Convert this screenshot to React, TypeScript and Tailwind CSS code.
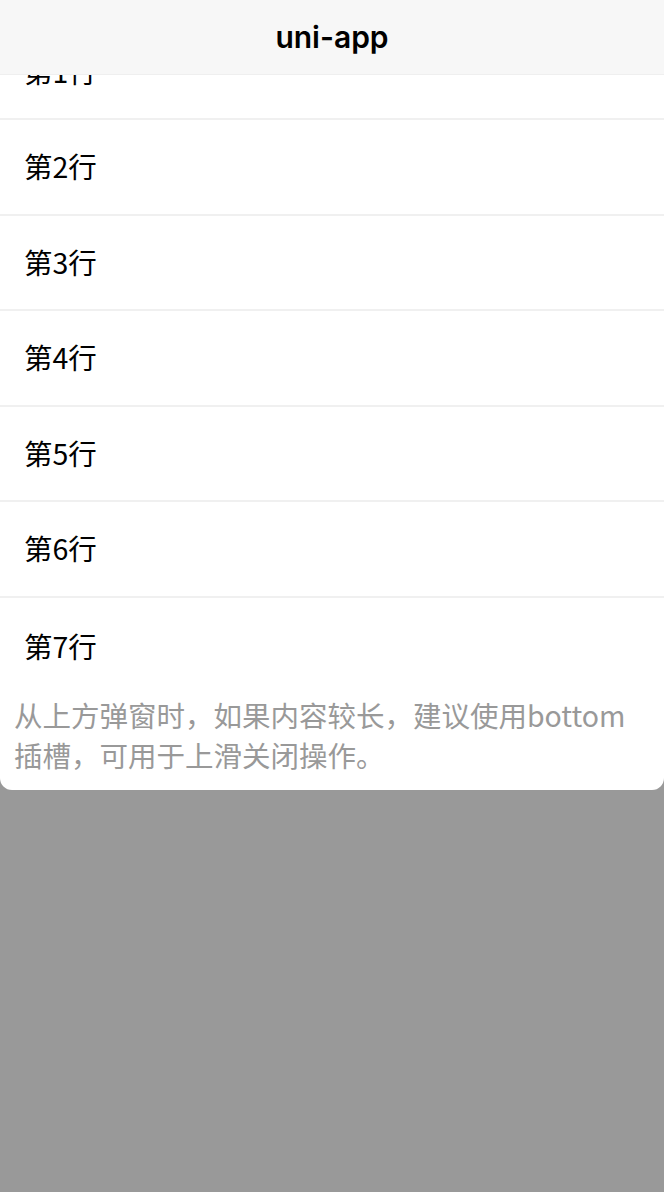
const ROWS = [1, 2, 3, 4, 5, 6, 7];

const cjk = "font-['Noto_Sans_CJK_SC','Noto_Sans',sans-serif]";

export default function App() {
  return (
    <div className="relative h-[1192px] w-[664px] overflow-hidden bg-[#999999]">
      {/* popup, slid in from the top and scrolled a bit under the nav bar */}
      <div className={`rounded-b-[12px] bg-white pt-[24.5px] ${cjk}`}>
        {ROWS.map((n) => (
          <div
            key={n}
            className={
              n < ROWS.length
                ? "flex h-[95.5px] items-center border-b-2 border-[#f0f0f0] pl-[24px] text-[28.5px] text-black"
                : "flex h-[97px] items-center pl-[24px] text-[28.5px] text-black"
            }
          >
            第{n}行
          </div>
        ))}
        <p className="px-[14px] pb-[15px] text-[28.5px] leading-[40px] text-[#999999]">
          从上方弹窗时，如果内容较长，建议使用bottom插槽，可用于上滑关闭操作。
        </p>
      </div>

      <header className="absolute inset-x-0 top-0 flex h-[75px] items-center justify-center border-b border-[#efefef] bg-[#f7f7f7]">
        <span className="font-['Inter','Liberation_Sans',sans-serif] text-[30px] font-semibold text-black">
          uni-app
        </span>
      </header>
    </div>
  );
}
